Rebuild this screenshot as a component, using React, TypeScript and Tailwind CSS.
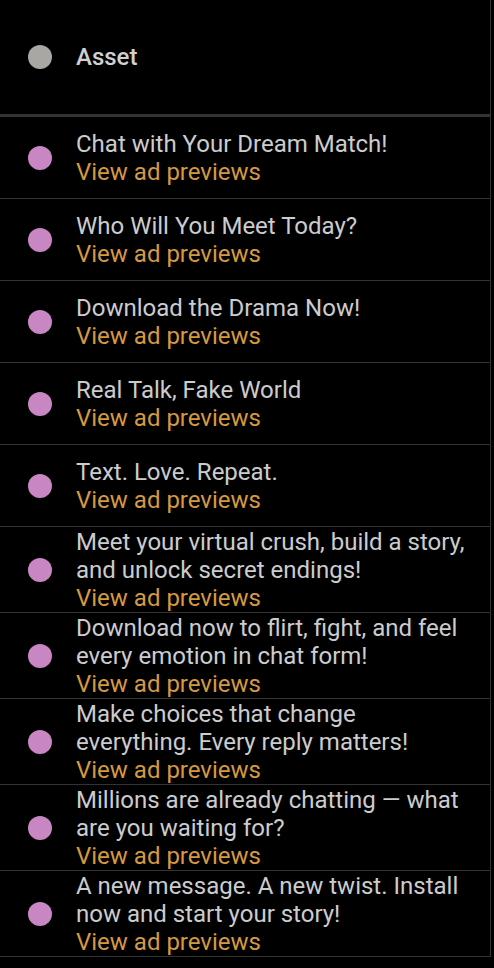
const ads = [
  "Chat with Your Dream Match!",
  "Who Will You Meet Today?",
  "Download the Drama Now!",
  "Real Talk, Fake World",
  "Text. Love. Repeat.",
  "Meet your virtual crush, build a story, and unlock secret endings!",
  "Download now to flirt, fight, and feel every emotion in chat form!",
  "Make choices that change everything. Every reply matters!",
  "Millions are already chatting — what are you waiting for?",
  "A new message. A new twist. Install now and start your story!",
];

function AdRow({ title }: { title: string }) {
  return (
    <div className="flex min-h-[82px] items-center border-b border-[#333333]">
      <div className="ml-[28px] h-6 w-6 shrink-0 rounded-full bg-[#c886c3]" />
      <div className="ml-6 py-[0.5px] pr-6 text-[24px] leading-[28px]">
        <div className="text-[#cccccc]">{title}</div>
        <div className="text-[#d6993f]">View ad previews</div>
      </div>
    </div>
  );
}

export default function App() {
  return (
    <div
      className="min-h-[968px] w-[494px] bg-black"
      style={{ fontFamily: "Roboto, 'Noto Sans', sans-serif" }}
    >
      <div className="w-[491px] border-r border-[#333333]">
        <div className="flex h-[117px] items-center border-b-[3px] border-[#333333]">
          <div className="ml-[28px] h-6 w-6 rounded-full bg-[#a9a7a3]" />
          <div className="ml-6 text-[24px] font-medium text-[#d0d0d0]">Asset</div>
        </div>
        {ads.map((t) => (
          <AdRow key={t} title={t} />
        ))}
      </div>
    </div>
  );
}
